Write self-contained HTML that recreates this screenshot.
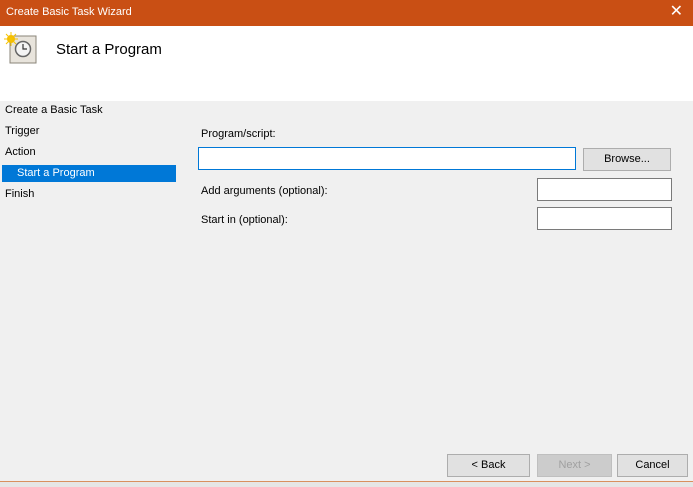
<!DOCTYPE html>
<html><head><style>
*{margin:0;padding:0;box-sizing:border-box}
body{width:693px;height:487px;overflow:hidden;background:#f0f0f0;font-family:"Segoe UI","Liberation Sans",sans-serif;font-size:11px;color:#000;position:relative}
.a{position:absolute}
.title{left:0;top:0;width:693px;height:26px;background:#c94f14;color:#fff;font-size:11px;line-height:24px;padding-left:6px}
.hdr{left:0;top:26px;width:693px;height:75px;background:#fff}
.nav{left:5px}
.inp{background:#fff;border:1px solid #7a7a7a;height:23px}
.btn{background:#e1e1e1;border:1px solid #adadad;height:23px;text-align:center;line-height:21px}
</style></head><body>
<div class="a title">Create Basic Task Wizard</div>
<div class="a" style="right:10px;top:2px;color:#fff;font-size:16px;line-height:20px;font-weight:300">✕</div>
<div class="a hdr"></div>
<svg class="a" style="left:4px;top:32px" width="34" height="34" viewBox="0 0 34 34">
<rect x="6" y="4" width="26" height="27" fill="#e8e4dc" stroke="#8a8478"/>
<circle cx="19" cy="17" r="7.5" fill="#f4f4f4" stroke="#666" stroke-width="1.5"/>
<path d="M19 12v5h4" stroke="#333" fill="none" stroke-width="1.2"/>
<circle cx="7" cy="7" r="4" fill="#f5b800"/>
<path d="M7 0v14M0 7h14M2 2l10 10M12 2L2 12" stroke="#f5c400" stroke-width="1"/>
</svg>
<div class="a" style="left:56px;top:41px;font-size:15px">Start a Program</div>
<div class="a nav" style="top:104px">Create a Basic Task</div>
<div class="a nav" style="top:125px">Trigger</div>
<div class="a nav" style="top:146px">Action</div>
<div class="a" style="left:2px;top:165px;width:174px;height:17px;background:#0078d7;color:#fff;padding-left:15px;line-height:16px">Start a Program</div>
<div class="a nav" style="top:188px">Finish</div>
<div class="a" style="left:201px;top:128px">Program/script:</div>
<div class="a inp" style="left:198px;top:147px;width:378px;border-color:#0078d7"></div>
<div class="a btn" style="left:583px;top:148px;width:88px">Browse...</div>
<div class="a" style="left:201px;top:185px">Add arguments (optional):</div>
<div class="a inp" style="left:537px;top:178px;width:135px;height:23px"></div>
<div class="a" style="left:201px;top:214px">Start in (optional):</div>
<div class="a inp" style="left:537px;top:207px;width:135px;height:23px"></div>
<div class="a btn" style="left:447px;top:454px;width:83px">&lt; Back</div>
<div class="a btn" style="left:537px;top:454px;width:75px;background:#ccc;border-color:#bfbfbf;color:#a0a0a0">Next &gt;</div>
<div class="a btn" style="left:617px;top:454px;width:71px">Cancel</div>
<div class="a" style="left:0;top:481px;width:693px;height:1px;background:#d9905f"></div>
<div class="a" style="left:0;top:482px;width:693px;height:5px;background:#e6e6e6"></div>
</body></html>
